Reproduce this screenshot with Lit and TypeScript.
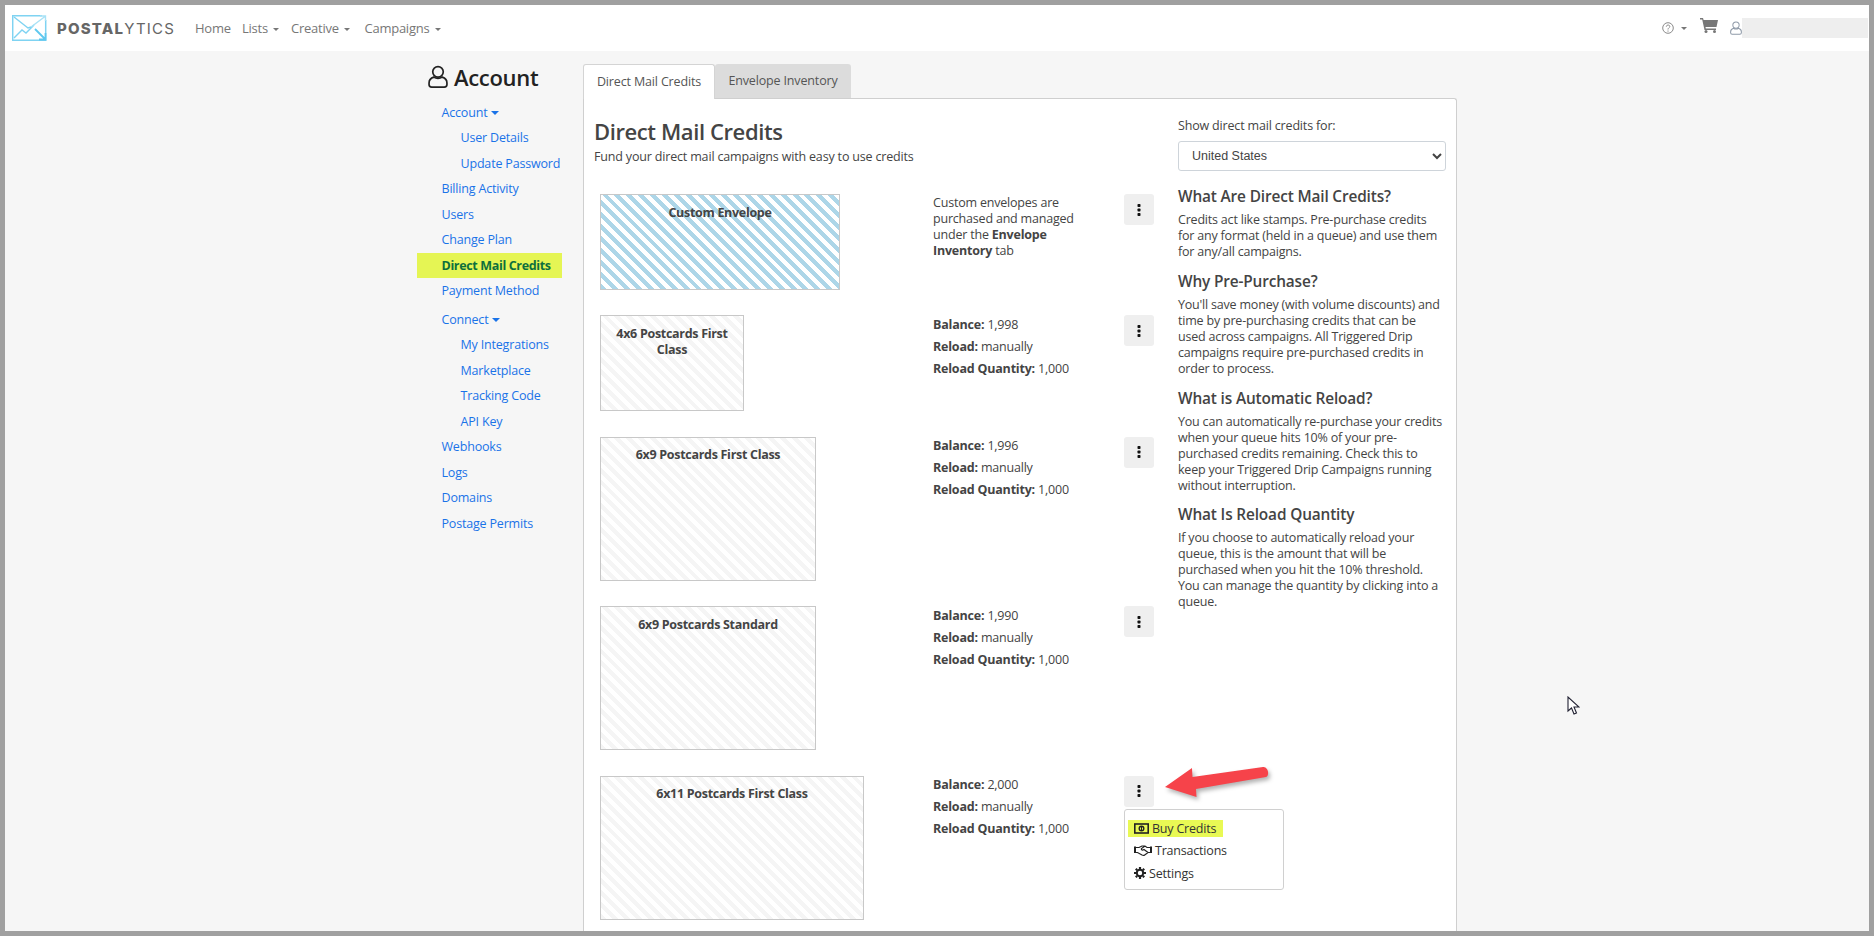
import { LitElement, html, css, svg, nothing } from 'lit';
import { customElement } from 'lit/decorators.js';
import { classMap } from 'lit/directives/class-map.js';

const sideLinks = [
	{ label: 'Account', caret: true },
	{ label: 'User Details', sub: true },
	{ label: 'Update Password', sub: true },
	{ label: 'Billing Activity' },
	{ label: 'Users' },
	{ label: 'Change Plan' },
	{ label: 'Direct Mail Credits', active: true },
	{ label: 'Payment Method' },
	{ label: 'Connect', caret: true, group: true },
	{ label: 'My Integrations', sub: true },
	{ label: 'Marketplace', sub: true },
	{ label: 'Tracking Code', sub: true },
	{ label: 'API Key', sub: true },
	{ label: 'Webhooks' },
	{ label: 'Logs' },
	{ label: 'Domains' },
	{ label: 'Postage Permits' },
];

const queues = [
	{ name: '4x6 Postcards First Class', w: 144, h: 96, balance: '1,998' },
	{ name: '6x9 Postcards First Class', w: 216, h: 144, balance: '1,996' },
	{ name: '6x9 Postcards Standard', w: 216, h: 144, balance: '1,990' },
	{ name: '6x11 Postcards First Class', w: 264, h: 144, balance: '2,000', open: true },
];

const faq = [
	{
		q: 'What Are Direct Mail Credits?',
		a: ['Credits act like stamps. Pre-purchase credits', 'for any format (held in a queue) and use them', 'for any/all campaigns.'],
	},
	{
		q: 'Why Pre-Purchase?',
		a: ["You'll save money (with volume discounts) and", 'time by pre-purchasing credits that can be', 'used across campaigns. All Triggered Drip', 'campaigns require pre-purchased credits in', 'order to process.'],
	},
	{
		q: 'What is Automatic Reload?',
		a: ['You can automatically re-purchase your credits', 'when your queue hits 10% of your pre-', 'purchased credits remaining. Check this to', 'keep your Triggered Drip Campaigns running', 'without interruption.'],
	},
	{
		q: 'What Is Reload Quantity',
		a: ['If you choose to automatically reload your', 'queue, this is the amount that will be', 'purchased when you hit the 10% threshold.', 'You can manage the quantity by clicking into a', 'queue.'],
	},
];

const userIcon = (size: number, color: string) => html`<svg width=${size} height=${size * 1.16} viewBox="0 0 19 22" fill="none" stroke=${color} stroke-width="1.6">
	<circle cx="9.5" cy="6.5" r="5"></circle>
	<path d="M5.5 11.5C2.5 12.5 1 14.5 1 17v1.5C1 20 2 21 3.5 21h12c1.5 0 2.5-1 2.5-2.5V17c0-2.500-1.500-4.500-4.500-5.500-1.200.8-2.500 1.200-4 1.200s-2.800-.4-4-1.200z"></path>
</svg>`;

const caret = () => html`<span class="caret"></span>`;

const kebab = svg`<svg width="4" height="12" viewBox="0 0 4 12" fill="#111"><rect x="0.500" y="0" width="3" height="3" rx="0.800"></rect><rect x="0.500" y="4.500" width="3" height="3" rx="0.800"></rect><rect x="0.500" y="9" width="3" height="3" rx="0.800"></rect></svg>`;

@customElement('app-root')
export class AppRoot extends LitElement {
	private renderLogo() {
		return html`<svg class="logo" width="35" height="26" viewBox="0 0 35 26" fill="none" stroke="#7fd3f2" stroke-width="1.400">
			<path d="M30 .7H.7v24.600h33V5" stroke-width="1.500"></path>
			<path d="M2 2l14 11 3-1"></path>
			<path d="M2 23l8-8 4 3 8-8"></path>
			<path d="M19 12L33 1.500M28 1h5.500v5" stroke="#a9e2f6"></path>
			<path d="M23 14l10 10M27 24.500h6.500V18" stroke="#5fc8ef" stroke-width="1.800"></path>
		</svg>`;
	}

	private renderNav() {
		return html`<header class="nav">
			${this.renderLogo()}
			<span class="brand"><b>POSTAL</b>YTICS</span>
			<a class="nav-link home">Home</a>
			<a class="nav-link lists">Lists ${caret()}</a>
			<a class="nav-link creative">Creative ${caret()}</a>
			<a class="nav-link campaigns">Campaigns ${caret()}</a>
			<div class="nav-right">
				<svg width="12" height="12" viewBox="0 0 12 12" fill="none" stroke="#8a8a8a"><circle cx="6" cy="6" r="5.300"></circle><path d="M4.300 4.700c0-2.200 3.500-2.200 3.500-.2 0 1.300-1.800 1.300-1.800 3M6 8.500v1.200"></path></svg>
				<span class="caret help-caret"></span>
				<svg class="cart" width="18" height="15" viewBox="0 0 18 15" fill="#777"><path d="M0 0h3l.6 2H18l-1.500 7H5.500l.3 1.500H16V12H4.500L2.200 1.500H0z"></path><circle cx="6" cy="13.500" r="1.500"></circle><circle cx="14.500" cy="13.500" r="1.500"></circle></svg>
				${userIcon(12, '#8f9aa8')}
				<span class="blurred"></span>
			</div>
		</header>`;
	}

	private renderSide() {
		return html`<nav class="side">
			<h1>${userIcon(20, '#222')}<span>Account</span></h1>
			${sideLinks.map(
				(l) => html`<a
					class=${classMap({ 'side-link': true, sub: !!l.sub, active: !!l.active, group: !!l.group })}
					>${l.label}${l.caret ? html` <span class="caret blue"></span>` : nothing}</a
				>`,
			)}
		</nav>`;
	}

	private renderMenu() {
		return html`<div class="menu">
			<div class="menu-item"><span class="mark">
				<svg width="15" height="11" viewBox="0 0 15 11"><rect x="0.800" y="1" width="13.400" height="9" fill="none" stroke="#222" stroke-width="1.600"></rect><circle cx="7.500" cy="5.500" r="2.300" fill="none" stroke="#222" stroke-width="1.400"></circle><path d="M7.500 4v3" stroke="#222"></path></svg>
				Buy Credits</span></div>
			<div class="menu-item">
				<svg width="18" height="11" viewBox="0 0 18 11" fill="none" stroke="#222" stroke-width="1.200"><path d="M0 1.500h2V8H0zM16 1.500h2V8h-2z" fill="#222" stroke="none"></path><path d="M2 2.500h3L8 1h3l2 1.500h3M16 7.500h-2l-4 3-2-.5-4.500-2.500H2M11 1L7.500 3.500C7 5 8.500 5.500 10 4.500l4 3"></path></svg>
				Transactions
			</div>
			<div class="menu-item">
				<svg width="12" height="12" viewBox="0 0 12 12"><circle cx="6" cy="6" r="3.200" fill="none" stroke="#222" stroke-width="2"></circle><path d="M6 0v12M0 6h12M1.800 1.800l8.400 8.400M10.200 1.800l-8.400 8.400" stroke="#222" stroke-width="2.200" stroke-dasharray="2 8"></path></svg>
				Settings
			</div>
		</div>`;
	}

	private renderQueues() {
		return queues.map(
			(q) => html`<div class="row">
				<div class="slot">
					<div class="card" style="width:${q.w}px;height:${q.h}px">${q.name}</div>
				</div>
				<div class="info stats">
					<div><b>Balance:</b> ${q.balance}</div>
					<div><b>Reload:</b> manually</div>
					<div><b>Reload Quantity:</b> 1,000</div>
				</div>
				<div class="actions">
					<button class="kebab">${kebab}</button>
					${q.open ? this.renderMenu() : nothing}
				</div>
			</div>`,
		);
	}

	private renderPanel() {
		return html`<section class="content">
			<div class="tabs">
				<a class="tab current">Direct Mail Credits</a>
				<a class="tab">Envelope Inventory</a>
			</div>
			<div class="panel">
				<div class="main">
					<h2>Direct Mail Credits</h2>
					<p class="lead">Fund your direct mail campaigns with easy to use credits</p>
					<div class="row first">
						<div class="slot"><div class="card custom" style="width:240px;height:96px">Custom Envelope</div></div>
						<div class="info custom-info">
							Custom envelopes are<br />purchased and managed<br />under the <b>Envelope</b><br /><b>Inventory</b> tab
						</div>
						<div class="actions"><button class="kebab">${kebab}</button></div>
					</div>
					${this.renderQueues()}
				</div>
				<aside class="help">
					<label>Show direct mail credits for:</label>
					<select><option>United States</option></select>
					${faq.map(
						(f) => html`<h3>${f.q}</h3>
							<p>${f.a.map((line) => html`${line}<br />`)}</p>`,
					)}
				</aside>
			</div>
		</section>`;
	}

	render() {
		return html`<div class="page">
			${this.renderNav()}
			<div class="body">${this.renderSide()}${this.renderPanel()}</div>
			<svg class="arrow" width="116" height="44" viewBox="0 0 116 44">
				<path d="M5 27L32 8l.5 9L103 7c5-.6 7 8 3 10L36 29l.5 8z" fill="#f6434a"></path>
			</svg>
			<svg class="cursor" width="13" height="20" viewBox="0 0 13 20"><path d="M1 1v14l3.500-3 2.500 6 2.500-1-2.500-6H12z" fill="#fff" stroke="#223" stroke-width="1.100"></path></svg>
		</div>`;
	}

	static styles = css`
		* {
			box-sizing: border-box;
		}

		:host {
			display: block;
			width: 1874px;
			height: 936px;
			font-family: 'Open Sans', sans-serif;
			font-size: 12.5px;
			color: #444;
		}

		.page {
			position: relative;
			width: 100%;
			height: 100%;
			border: 5px solid #a0a0a0;
			background: #f6f6f6;
			display: flex;
			flex-direction: column;
			overflow: hidden;
		}

		.nav {
			flex: none;
			height: 46px;
			background: #fff;
			display: flex;
			align-items: center;
			padding-left: 7px;
			color: #777;
		}

		.logo {
			margin-right: 10px;
		}

		.brand {
			width: 138px;
			font-family: Inter, sans-serif;
			font-size: 15px;
			letter-spacing: 1.2px;
			color: #666;
		}

		.brand b {
			font-weight: 800;
		}

		.nav-link {
			color: #777;
			font-size: 13px;
			letter-spacing: -0.25px;
		}

		.home {
			width: 47px;
		}
		.lists {
			width: 49px;
		}
		.creative {
			width: 73.500px;
		}

		.caret {
			display: inline-block;
			width: 0;
			height: 0;
			margin-left: 2px;
			vertical-align: 2px;
			border: 3.5px solid transparent;
			border-top-color: #777;
			border-bottom: 0;
		}

		.caret.blue {
			border-top-color: #1a73e8;
			border-width: 4px;
			border-bottom: 0;
			margin-left: 0;
			vertical-align: 2px;
		}

		.nav-right {
			margin-left: auto;
			margin-right: 1px;
			display: flex;
			align-items: center;
		}

		.help-caret {
			margin: 0 13px 0 7px;
		}

		.cart {
			margin: -6px 12px 0 0;
		}

		.blurred {
			width: 126px;
			height: 20px;
			background: #eeeeee;
		}

		.body {
			flex: 1;
			min-height: 0;
			display: flex;
			padding-left: 412px;
		}

		.side {
			flex: none;
			width: 145px;
			margin-right: 21px;
			padding-top: 12px;
		}

		.side h1 {
			display: flex;
			align-items: center;
			gap: 6px;
			margin: 0 0 8.500px 11px;
			height: 28px;
			font-size: 22px;
			font-weight: 600;
			letter-spacing: -0.3px;
			color: #222;
		}

		.side-link {
			display: block;
			height: 25.500px;
			line-height: 25.500px;
			padding-left: 24.500px;
			color: #1a73e8;
			font-size: 12.500px;
			letter-spacing: -0.18px;
			white-space: nowrap;
		}

		.side-link.sub {
			padding-left: 43.500px;
		}

		.side-link.group {
			margin-top: 3px;
		}

		.side-link.active {
			background: #e5f554;
			color: #0d6f3d;
			font-weight: 700;
			letter-spacing: -0.35px;
		}

		.content {
			flex: none;
			width: 874px;
			padding-top: 13px;
			display: flex;
			flex-direction: column;
		}

		.tabs {
			display: flex;
			height: 34px;
		}

		.tab {
			height: 34px;
			line-height: 33px;
			text-align: center;
			font-size: 12.500px;
			letter-spacing: -0.15px;
			background: #dcdcdc;
			border-radius: 3px 3px 0 0;
			width: 136px;
			color: #555;
		}

		.tab.current {
			width: 132px;
			background: #fff;
			border: 1px solid #d4d4d4;
			border-bottom: 0;
			position: relative;
			height: 35px;
			z-index: 1;
		}

		.panel {
			flex: 1;
			background: #fff;
			border: 1px solid #cfcfcf;
			border-bottom: 0;
			border-radius: 0 3px 0 0;
			display: flex;
		}

		.main {
			flex: none;
			width: 594px;
			padding-left: 10px;
		}

		h2 {
			margin: 19px 0 0;
			height: 27px;
			line-height: 27px;
			font-size: 22px;
			font-weight: 600;
			color: #444;
			letter-spacing: -0.4px;
		}

		.lead {
			margin: 3px 0 0;
			height: 18px;
			line-height: 18px;
			letter-spacing: -0.17px;
		}

		.row {
			display: flex;
			margin-top: 25.400px;
		}

		.row.first {
			margin-top: 28px;
		}

		.slot {
			flex: none;
			width: 339px;
			padding-left: 6px;
		}

		.card {
			border: 1px solid #c8c8c8;
			padding: 9.500px 6px 0;
			text-align: center;
			font-weight: 700;
			line-height: 16px;
			letter-spacing: -0.3px;
			background: repeating-linear-gradient(45deg, #f5f5f5, #f5f5f5 4.200px, #fff 4.200px, #fff 8.400px);
		}

		.card.custom {
			background: repeating-linear-gradient(45deg, #add6e8, #add6e8 4.200px, #fff 4.200px, #fff 8.400px);
		}

		.info {
			flex: none;
			width: 191px;
			line-height: 16px;
			letter-spacing: -0.2px;
			white-space: nowrap;
		}

		.custom-info {
			padding-top: 1px;
		}

		.info b {
			font-weight: 700;
		}

		.stats {
			line-height: 22px;
			margin-top: -1.500px;
		}

		.actions {
			position: relative;
			flex: none;
		}

		.kebab {
			display: flex;
			align-items: center;
			justify-content: center;
			width: 30px;
			height: 31px;
			padding: 0;
			border: 0;
			border-radius: 3px;
			background: #efefef;
		}

		.menu {
			position: absolute;
			top: 33.500px;
			left: 0;
			width: 160px;
			height: 81px;
			padding: 7px 3px;
			background: #fff;
			border: 1px solid #d0d0d0;
			border-radius: 3px;
			z-index: 2;
		}

		.menu-item {
			height: 22.500px;
			padding-left: 6px;
			display: flex;
			align-items: center;
			gap: 3px;
			white-space: nowrap;
			color: #333;
			letter-spacing: -0.2px;
		}

		.menu-item:first-child {
			padding-left: 0;
		}

		.mark {
			display: flex;
			align-items: center;
			gap: 3px;
			width: 95px;
			height: 17px;
			padding-left: 6px;
			background: #e9f954;
		}

		.help {
			flex: none;
			width: 268px;
			margin-left: 0;
			padding-top: 18px;
		}

		.help label {
			display: block;
			height: 18px;
			line-height: 18px;
			letter-spacing: -0.17px;
		}

		select {
			display: block;
			width: 268px;
			height: 30px;
			margin-top: 6px;
			padding-left: 9px;
			font-family: 'Liberation Sans', sans-serif;
			font-size: 12.500px;
			color: #444;
			background: #fff;
			border: 1px solid #ced4da;
			border-radius: 3px;
		}

		h3 {
			margin: 11.800px 0 0;
			height: 20px;
			line-height: 20px;
			font-size: 15.400px;
			font-weight: 600;
			letter-spacing: -0.15px;
			color: #444;
		}

		select + h3 {
			margin-top: 16px;
		}

		.help p {
			margin: 5px 0 0;
			line-height: 16px;
			font-size: 12.500px;
			letter-spacing: -0.2px;
			white-space: nowrap;
		}

		.arrow {
			position: absolute;
			left: 1155px;
			top: 755px;
			filter: drop-shadow(2px 3px 2px rgba(0, 0, 0, 0.3));
		}

		.cursor {
			position: absolute;
			left: 1562px;
			top: 691px;
		}
	`;
}
